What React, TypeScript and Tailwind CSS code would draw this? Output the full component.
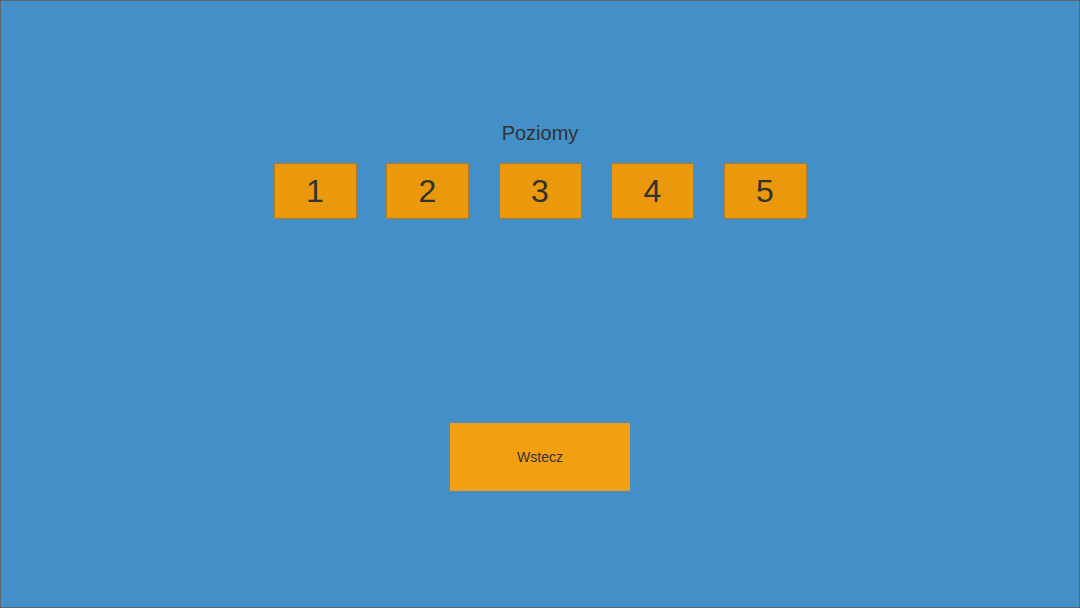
export default function App() {
  const levels = [1, 2, 3, 4, 5];

  return (
    <div className="w-[1080px] h-[608px] bg-[#4390c8] border border-[#5b6670] flex flex-col items-center font-['Liberation_Sans',Arial,sans-serif] text-[#323232]">
      <h1 className="mt-[120px] text-[20px] leading-[24px]">Poziomy</h1>

      <div className="mt-[18px] flex gap-[29.5px]">
        {levels.map((n) => (
          <button
            key={n}
            className="w-[83px] h-[56px] bg-[#ea990c] border border-[#b7791c] rounded-[2px] text-[32px] leading-none flex items-center justify-center"
          >
            {n}
          </button>
        ))}
      </div>

      <button className="mt-[204px] w-[180px] h-[68px] bg-[#f39f12] text-[14px] flex items-center justify-center">
        Wstecz
      </button>
    </div>
  );
}
